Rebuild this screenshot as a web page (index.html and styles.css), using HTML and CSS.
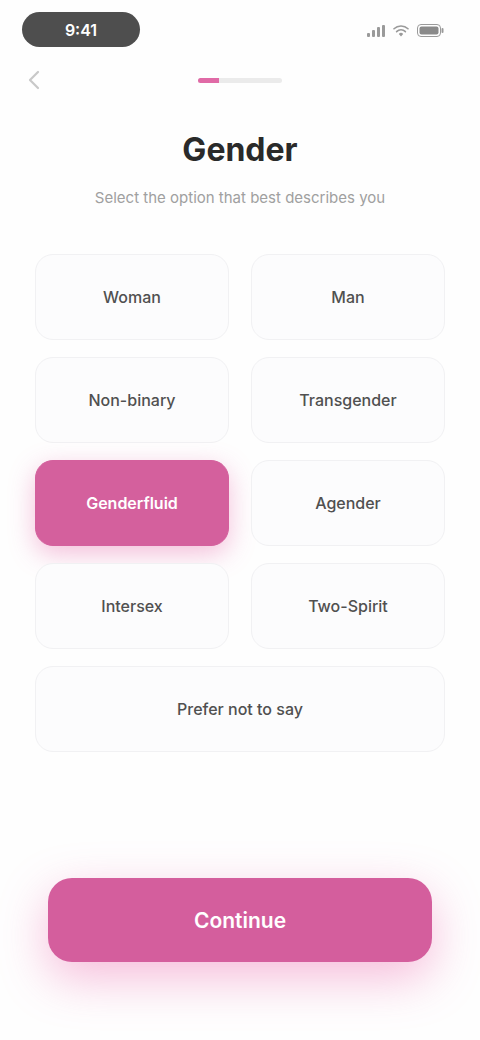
FILE: index.html
```html
<!DOCTYPE html>
<html lang="en">
<head>
<meta charset="utf-8">
<title>Gender</title>
<link rel="stylesheet" href="styles.css">
</head>
<body>
<div class="screen">
  <div class="status">
    <div class="time-pill">9:41</div>
    <div class="status-icons">
      <svg width="18" height="12" viewBox="0 0 18 12"><rect x="0" y="8" width="3" height="4" rx="1" fill="#9a9a9a"/><rect x="5" y="5" width="3" height="7" rx="1" fill="#9a9a9a"/><rect x="10" y="2" width="3" height="10" rx="1" fill="#9a9a9a"/><rect x="15" y="0" width="3" height="12" rx="1" fill="#9a9a9a"/></svg>
      <svg width="16" height="12" viewBox="0 0 16 12"><path d="M8 11.5l2.2-2.6a3.2 3.2 0 0 0-4.4 0z" fill="#9a9a9a"/><path d="M3.6 6.6a6.3 6.3 0 0 1 8.8 0" stroke="#9a9a9a" stroke-width="1.6" fill="none" stroke-linecap="round"/><path d="M1 3.8a10 10 0 0 1 14 0" stroke="#9a9a9a" stroke-width="1.6" fill="none" stroke-linecap="round"/></svg>
      <svg width="27" height="13" viewBox="0 0 27 13"><rect x="0.5" y="0.5" width="23" height="12" rx="3.5" stroke="#9a9a9a" fill="none"/><rect x="2.5" y="2.5" width="19" height="8" rx="2" fill="#8a8a8a"/><rect x="24.5" y="4" width="2" height="5" rx="1" fill="#9a9a9a"/></svg>
    </div>
  </div>
  <div class="nav">
    <svg class="back" width="12" height="20" viewBox="0 0 12 20"><path d="M10 2L2 10l8 8" stroke="#c8c8c8" stroke-width="2.2" fill="none" stroke-linecap="round" stroke-linejoin="round"/></svg>
    <div class="progress"><div class="progress-fill"></div></div>
  </div>
  <h1 class="title">Gender</h1>
  <p class="subtitle">Select the option that best describes you</p>
  <div class="options">
    <div class="option">Woman</div>
    <div class="option">Man</div>
    <div class="option">Non-binary</div>
    <div class="option">Transgender</div>
    <div class="option selected">Genderfluid</div>
    <div class="option">Agender</div>
    <div class="option">Intersex</div>
    <div class="option">Two-Spirit</div>
    <div class="option wide">Prefer not to say</div>
  </div>
  <div class="footer">
    <button class="continue">Continue</button>
  </div>
</div>
</body>
</html>
```

FILE: styles.css
```css
* { box-sizing: border-box; }
html, body { margin: 0; padding: 0; background: #ffffff; }
body { font-family: Inter, "Noto Sans", "Liberation Sans", sans-serif; color: #222; }

.screen {
  width: 480px;
  height: 1040px;
  display: flex;
  flex-direction: column;
  overflow: hidden;
  background: #fefefe;
}

.status {
  height: 60px;
  padding: 12px 36px 0 22px;
  display: flex;
  justify-content: space-between;
  align-items: flex-start;
}
.time-pill {
  width: 118px;
  height: 35px;
  border-radius: 18px;
  background: #4e4e4e;
  color: #fff;
  font-size: 16px;
  font-weight: 600;
  display: flex;
  align-items: center;
  justify-content: center;
}
.status-icons {
  margin-top: 12px;
  display: flex;
  gap: 8px;
  align-items: center;
}

.nav {
  height: 40px;
  display: flex;
  align-items: center;
  justify-content: center;
  position: relative;
}
.back { position: absolute; left: 28px; top: 10px; }
.progress {
  width: 84px;
  height: 5px;
  border-radius: 3px;
  background: #ebebeb;
  overflow: hidden;
}
.progress-fill { width: 25%; height: 100%; background: #e06aa6; }

.title {
  margin: 30px 0 0;
  text-align: center;
  font-size: 32px;
  line-height: 40px;
  font-weight: 700;
  color: #2a2a2a;
}
.subtitle {
  margin: 18px 0 0;
  text-align: center;
  font-size: 15px;
  line-height: 20px;
  color: #a0a0a0;
}

.options {
  margin-top: 46px;
  padding: 0 35px;
  display: grid;
  grid-template-columns: 1fr 1fr;
  column-gap: 22px;
  row-gap: 17px;
}
.option {
  height: 86px;
  border-radius: 18px;
  background: #fcfcfd;
  border: 1px solid #f1f1f3;
  display: flex;
  align-items: center;
  justify-content: center;
  font-size: 16px;
  font-weight: 500;
  color: #505050;
}
.option.wide { grid-column: 1 / 3; }
.option.selected {
  background: #d4609d;
  border-color: #d4609d;
  color: #ffffff;
  font-weight: 600;
  box-shadow: 0 8px 26px rgba(230, 90, 160, 0.38);
}

.footer {
  margin-top: auto;
  padding: 0 48px 78px;
}
.continue {
  width: 100%;
  height: 84px;
  border: 0;
  border-radius: 24px;
  background: #d45e9d;
  color: #ffffff;
  font-family: inherit;
  font-size: 21px;
  font-weight: 600;
  box-shadow: 0 16px 48px rgba(235, 90, 165, 0.4);
}
```
